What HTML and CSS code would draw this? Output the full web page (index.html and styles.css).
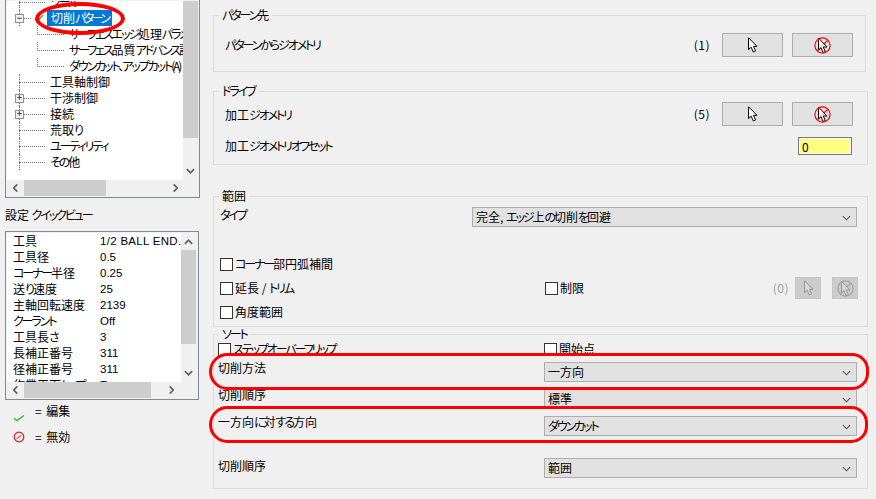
FILE: index.html
```html
<!DOCTYPE html>
<html lang="ja">
<head>
<meta charset="utf-8">
<title>切削パターン</title>
<link rel="stylesheet" href="styles.css">
</head>
<body>
<svg class="defs" width="0" height="0" aria-hidden="true">
  <symbol id="cursor" viewBox="0 0 11 16"><path d="M1.5 .8V12.6L4.2 10.2 6.3 15 8.6 14 6.5 9.3H10Z" fill="#fff" stroke="#000"/></symbol>
  <symbol id="no" viewBox="0 0 17 17"><path d="M3.4 13.6 13.6 3.4" stroke="#f00" stroke-width="1.3"/><path d="M4.5 1V13L7 10.7 9 15.5 11.3 14.5 9.2 10H13Z" fill="#fff" fill-opacity=".75" stroke="#000"/><circle cx="8.5" cy="8.5" r="7.6" fill="none" stroke="#f00" stroke-width="1.2"/></symbol>
  <symbol id="chev" viewBox="0 0 10 6"><path d="M1 1 5 5 9 1" fill="none" stroke="currentColor" stroke-width="1.9"/></symbol>
  <symbol id="caret" viewBox="0 0 10 6"><path d="M1 1 5 5 9 1" fill="none" stroke="currentColor" stroke-width="1.2"/></symbol>
</svg>
<div class="page">
  <aside class="side">
    <div class="listbox tree-box">
      <div class="viewport">
        <ul class="tree">
          <li class="row"><i class="stem"></i><span class="t k">ツール</span></li>
          <li class="row"><b class="box">−</b><i class="stem short"></i><svg class="tick" viewBox="0 0 10 8"><path d="M1 5 3.5 7 9 1" fill="none" stroke="#3cb043" stroke-width="1.5"/></svg><span class="t sel">切削<span class="k">パターン</span></span></li>
          <li class="row sub"><i class="sub-stem"></i><span class="t"><span class="k">サーフェスエッジ</span>処理<span class="k">パラメータ</span></span></li>
          <li class="row sub"><i class="sub-stem"></i><span class="t"><span class="k">サーフェス</span>品質<span class="k">アドバンス</span>設定</span></li>
          <li class="row sub"><i class="sub-stem last"></i><span class="t k">ダウンカット、アップカット(A)</span></li>
          <li class="row"><i class="stem"></i><span class="t">工具軸制御</span></li>
          <li class="row"><b class="box plus">+</b><i class="stem"></i><span class="t">干渉制御</span></li>
          <li class="row"><b class="box plus">+</b><i class="stem"></i><span class="t">接続</span></li>
          <li class="row"><i class="stem"></i><span class="t">荒取<span class="k">り</span></span></li>
          <li class="row"><i class="stem"></i><span class="t k">ユーティリティ</span></li>
          <li class="row"><i class="stem"></i><span class="t"><span class="k">その</span>他</span></li>
        </ul>
      </div>
      <div class="vbar">
        <div class="vthumb tree-thumb"></div>
        <svg class="arrow"><use href="#chev"/></svg>
      </div>
      <div class="hbar">
        <svg class="arrow left"><use href="#chev"/></svg>
        <div class="hthumb tree-hthumb"></div>
        <svg class="arrow right"><use href="#chev"/></svg>
      </div>
    </div>
    <p class="qv-title">設定 <span class="k">クイックビュー</span></p>
    <div class="listbox qv-box">
      <div class="viewport">
        <dl class="qv">
          <dt>工具</dt><dd class="wide">1/2 BALL END.</dd>
          <dt>工具径</dt><dd>0.5</dd>
          <dt><span class="k">コーナー</span>半径</dt><dd>0.25</dd>
          <dt>送<span class="k">り</span>速度</dt><dd>25</dd>
          <dt>主軸回転速度</dt><dd>2139</dd>
          <dt class="k">クーラント</dt><dd>Off</dd>
          <dt>工具長<span class="k">さ</span></dt><dd>3</dd>
          <dt>長補正番号</dt><dd>311</dd>
          <dt>径補正番号</dt><dd>311</dd>
          <dt>作業平面<span class="k">トップ</span></dt><dd>T</dd>
        </dl>
      </div>
      <div class="vbar">
        <svg class="arrow up"><use href="#chev"/></svg>
        <div class="vthumb qv-thumb"></div>
        <svg class="arrow"><use href="#chev"/></svg>
      </div>
      <div class="hbar">
        <svg class="arrow left"><use href="#chev"/></svg>
        <div class="hthumb qv-hthumb"></div>
        <svg class="arrow right"><use href="#chev"/></svg>
      </div>
    </div>
    <div class="key">
      <svg class="key-icon low" viewBox="0 0 12 8"><path d="M1 4.5 4 6.5 11 1.5" fill="none" stroke="#3cb043" stroke-width="1.5"/></svg>
      <span>= 編集</span>
    </div>
    <div class="key">
      <svg class="key-icon" viewBox="0 0 12 12"><circle cx="6" cy="6" r="4.8" fill="none" stroke="#e8101a" stroke-width="1.2"/><path d="M3.5 7.8 8.5 4.2" stroke="#e8101a"/></svg>
      <span>= 無効</span>
    </div>
  </aside>

  <main class="main">
    <fieldset class="group g1">
      <legend><span class="k">パターン</span>先</legend>
      <div class="pick-row">
        <span class="k">パターンからジオメトリ</span>
        <span class="count">(1)</span>
        <button class="pick"><svg class="ic-cursor"><use href="#cursor"/></svg></button>
        <button class="pick"><svg class="ic-no"><use href="#no"/></svg></button>
      </div>
    </fieldset>

    <fieldset class="group g2">
      <legend class="k">ドライブ</legend>
      <div class="pick-row">
        <span class="drop">加工<span class="k">ジオメトリ</span></span>
        <span class="count">(5)</span>
        <button class="pick"><svg class="ic-cursor"><use href="#cursor"/></svg></button>
        <button class="pick"><svg class="ic-no"><use href="#no"/></svg></button>
      </div>
      <div class="offset-row">
        <span>加工<span class="k">ジオメトリオフセット</span></span>
        <input class="num" value="0" aria-label="オフセット">
      </div>
    </fieldset>

    <fieldset class="group g3">
      <legend>範囲</legend>
      <div class="type-row">
        <span class="k">タイプ</span>
        <div class="select"><span>完全, <span class="k">エッジ</span>上<span class="k">の</span>切削<span class="k">を</span>回避</span><svg class="caret"><use href="#caret"/></svg></div>
      </div>
      <label class="check-row first"><span class="cb"></span><span><span class="k">コーナー</span>部円弧補間</span></label>
      <div class="check-row split">
        <label class="cell"><span class="cb"></span><span>延長 / <span class="k">トリム</span></span></label>
        <label class="cell"><span class="cb"></span><span>制限</span></label>
        <span class="count off">(0)</span>
        <button class="pick small" disabled><svg class="ic-cursor dim"><use href="#cursor"/></svg></button>
        <button class="pick small" disabled><svg class="ic-no dim"><use href="#no"/></svg></button>
      </div>
      <label class="check-row"><span class="cb"></span><span>角度範囲</span></label>
    </fieldset>

    <fieldset class="group g4">
      <legend class="k">ソート</legend>
      <div class="check-row sort-checks">
        <label class="cell"><span class="cb"></span><span class="k">ステップオーバーフリップ</span></label>
        <label class="cell"><span class="cb"></span><span>開始点</span></label>
      </div>
      <div class="sort-row r1"><span class="raise">切削方法</span><div class="select"><span>一方向</span><svg class="caret"><use href="#caret"/></svg></div></div>
      <div class="sort-row r2"><span class="raise">切削順序</span><div class="select"><span>標準</span><svg class="caret"><use href="#caret"/></svg></div></div>
      <div class="sort-row r3"><span class="raise">一方向<span class="k">に</span>対<span class="k">する</span>方向</span><div class="select"><span class="k">ダウンカット</span><svg class="caret"><use href="#caret"/></svg></div></div>
      <div class="sort-row r4"><span>切削順序</span><div class="select"><span>範囲</span><svg class="caret"><use href="#caret"/></svg></div></div>
    </fieldset>
  </main>
</div>
<div class="mark mark-tree"></div>
<div class="mark mark-method"></div>
<div class="mark mark-direction"></div>
</body>
</html>
```
FILE: styles.css
```css
* { box-sizing: border-box; }
html, body { margin: 0; height: 499px; overflow: hidden; }
body {
  position: relative;
  background: #f0f0f0;
  color: #000;
  font: 12px/16px "Noto Sans CJK JP", "Liberation Sans", sans-serif;
}
.defs { position: absolute; }
.k { font-feature-settings: "palt"; letter-spacing: -2.1px; }
.page { display: flex; height: 499px; }

/* left column */
.side { flex: 0 0 213px; padding-left: 5px; }
.listbox {
  display: grid;
  grid-template-columns: 1fr 15px;
  grid-template-rows: 1fr 16px;
  width: 195px;
  border: 1px solid #828790;
  background: #f0f0f0;
  padding: 1px;
}
.tree-box { height: 199px; margin-top: -1px; }
.qv-box { width: 194px; height: 169px; padding: 1px 2px 1px 1px; }
.viewport { background: #fff; overflow: hidden; min-width: 0; min-height: 0; }

.tree { list-style: none; margin: -7px 0 0; padding: 0; }
.row { position: relative; display: flex; align-items: center; height: 16px; padding-left: 41px; white-space: nowrap; }
.row.sub { padding-left: 60px; }
.t { padding: 0 2px; }
.sel { background: #0078d7; color: #fff; padding: 0 0 0 4px; margin-left: -1px; width: 65px; height: 16px; }
.sel .k { letter-spacing: -2.6px; }
.stem { position: absolute; left: 12px; top: 8px; width: 26px; border-top: 1px dotted #777; }
.stem.short { width: 8px; left: 16px; }
.row:not(.sub)::before { content: ""; position: absolute; left: 12px; top: 0; height: 16px; border-left: 1px dotted #777; }
.sub-stem { position: absolute; left: 30px; top: 0; width: 27px; height: 9px; border-left: 1px dotted #777; border-bottom: 1px dotted #777; }
.box {
  position: absolute; left: 8px; top: 4px; z-index: 1;
  width: 9px; height: 9px;
  border: 1px solid #8a919a; background: #f4f4f4;
  color: #1f3f8f; font: 700 9px/7px "Liberation Sans", sans-serif; text-align: center;
}
.tick { position: absolute; left: 27px; top: 4px; width: 10px; height: 8px; }

.vbar { position: relative; background: #f0f0f0; }
.vthumb { background: #cdcdcd; }
.tree-thumb { height: 137px; }
.qv-thumb { height: 94px; margin-top: 17px; }
.arrow { position: absolute; width: 9px; height: 6px; color: #606060; left: 3px; bottom: 6px; }
.arrow.up { top: 6px; bottom: auto; transform: rotate(180deg); }
.hbar { grid-column: 1 / 3; position: relative; background: #f0f0f0; }
.hthumb { position: absolute; top: 0; bottom: 0; left: 17px; background: #cdcdcd; }
.tree-hthumb { width: 82px; }
.qv-hthumb { width: 127px; }
.arrow.left { left: 4px; bottom: 5px; transform: rotate(90deg); }
.arrow.right { left: auto; right: 18px; bottom: 5px; transform: rotate(-90deg); }
.qv-box .arrow.right { right: 20px; }

.qv-title { margin: 9px 0 8px; height: 16px; }
.qv {
  display: grid; grid-template-columns: 87px 1fr;
  margin: 0; padding: 0 0 0 6px;
  white-space: nowrap;
}
.qv dt, .qv dd { margin: 0; height: 16px; }
.qv dd { font-family: "Liberation Sans", sans-serif; font-size: 11.5px; }
.wide { letter-spacing: .3px; }

.key { display: flex; align-items: center; height: 16px; margin-top: 3px; word-spacing: 2px; }
.key + .key { margin-top: 10px; }
.key-icon { flex: 0 0 12px; width: 12px; height: 12px; margin: 0 10px 0 8px; }
.key-icon.low { margin-top: 13px; }

/* right column */
.main { flex: 0 0 663px; padding-top: 8px; }
.group { margin: 0; padding: 0; min-width: 0; border: 1px solid #dcdcdc; }
.group legend { padding: 0 3px; line-height: 14px; }
.g1 { width: 653px; padding: 11px 12px 14px 11px; }
.g1 legend, .g2 legend { margin-left: -6px; }
.g2 { width: 655px; margin-top: 12px; padding: 4px 14px 9px 11px; }
.g3 { width: 655px; margin-top: 24px; padding: 4px 10px 2px 6px; }
.g3 legend { margin-left: -1px; }
.g4 { width: 655px; margin-top: 0; padding: 1px 10px 10px 4px; }
.g4 legend { margin-left: 1px; }

.pick-row { display: flex; align-items: center; height: 24px; }
.drop { margin-top: 2px; }
.count { margin-left: auto; margin-right: 12px; letter-spacing: .5px; }
.pick {
  display: flex; align-items: center; justify-content: center;
  flex: 0 0 61px; height: 24px; padding: 0;
  background: #e1e1e1; border: 1px solid #adadad;
}
.pick + .pick { margin-left: 9px; }
.ic-cursor { width: 11px; height: 16px; }
.ic-no { width: 17px; height: 17px; }
.g2 .pick-row { margin-bottom: 11px; }
.offset-row { display: flex; align-items: center; justify-content: space-between; height: 18px; }
.num {
  width: 54px; height: 18px; margin-right: 1px; padding: 0 3px;
  border: 1px solid #7a7a7a; outline: 1px solid #fff; outline-offset: -2px;
  background: #ffff80; font: inherit;
}

.select {
  position: relative; display: flex; align-items: center;
  height: 20px; padding-left: 3px;
  background: #e1e1e1; border: 1px solid #adadad;
  white-space: nowrap;
}
.caret { position: absolute; right: 5px; top: 7px; width: 9px; height: 6px; color: #555; }

.type-row { display: grid; grid-template-columns: 252px 1fr; height: 20px; }
.check-row { display: flex; align-items: center; height: 24px; white-space: nowrap; }
.check-row.first { margin-top: 25px; }
.cb { flex: 0 0 13px; width: 13px; height: 13px; margin-right: 2px; background: #fff; border: 1px solid #333; }
.cell { display: flex; flex: none; align-items: center; width: 325px; white-space: nowrap; }
.split { margin-right: -1px; }
.split .cell + .cell { width: auto; }
.off { color: #a0a0a0; margin-right: 6px; }
.pick.small { flex: 0 0 26px; height: 22px; background: #cccccc; border-color: #c4c4c4; }
.pick.small + .pick.small { margin-left: 11px; }
.dim { opacity: .28; filter: grayscale(1); }

.sort-checks { height: 14px; margin-bottom: 6px; }
.sort-checks .cell { width: 326px; }
.sort-row { display: grid; grid-template-columns: 326px 1fr; height: 20px; }
.raise { margin-top: -2px; }
.r2, .r3 { margin-top: 7px; }
.r4 { margin-top: 22px; }

/* hand-drawn red annotations */
.mark { position: absolute; border: 3px solid #f00; pointer-events: none; }
.mark-tree { left: 35px; top: 2px; width: 90px; height: 33px; border-width: 4px; border-radius: 50%; }
.mark-method { left: 209px; top: 353px; width: 660px; height: 37px; border-radius: 22px 20px 20px 22px; }
.mark-direction { left: 209px; top: 406px; width: 659px; height: 37px; border-radius: 22px 20px 20px 22px; }
```
